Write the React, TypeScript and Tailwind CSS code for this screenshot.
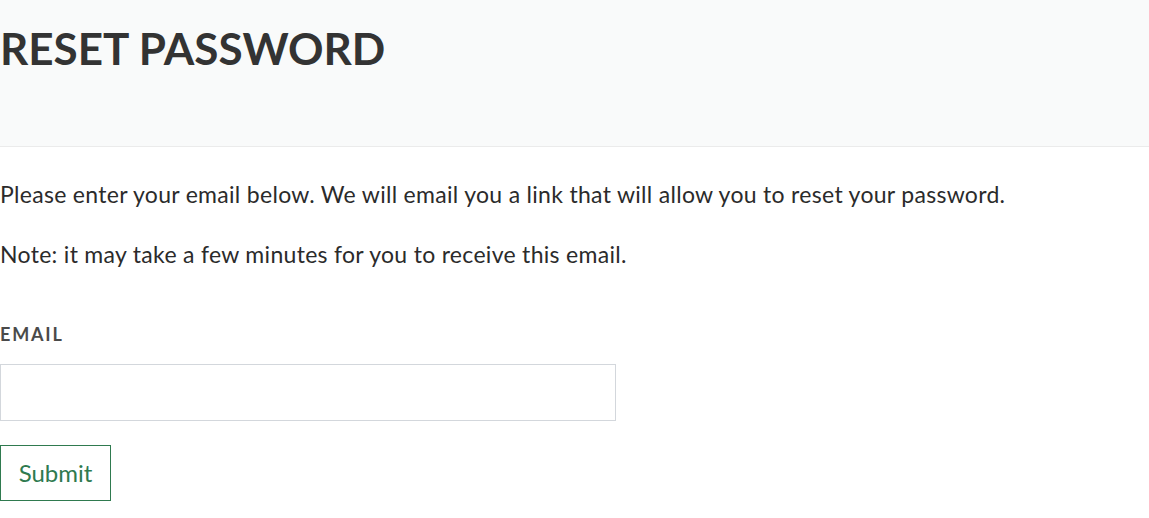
export default function App() {
  return (
    <div className="min-h-[518px] bg-white font-['Lato','Liberation_Sans',sans-serif] text-[#2b2b2b]">
      <header className="h-[147px] border-b border-[#ebebeb] bg-[#f9fafa] pt-[22px]">
        <h1 className="text-[44px] font-bold leading-[1.2] text-[#333333]">
          RESET PASSWORD
        </h1>
      </header>

      <main className="pt-[32px]">
        <p className="text-[23px] leading-[30px] tracking-[0.3px]">
          Please enter your email below. We will email you a link that will allow you to reset your password.
        </p>
        <p className="mt-[30px] text-[23px] leading-[30px] tracking-[0.3px]">
          Note: it may take a few minutes for you to receive this email.
        </p>

        <form className="mt-[52px]">
          <label className="block text-[18px] font-bold leading-[27px] tracking-[1.8px] text-[#4a4a4a]">
            EMAIL
          </label>
          <input
            type="email"
            className="mt-[16px] block h-[57px] w-[616px] border border-[#d3d7dc] bg-white px-3 outline-none"
          />
          <button
            type="button"
            className="mt-[24px] h-[56px] w-[111px] border border-[#2f7a4f] bg-white text-[24px] text-[#2f7a4f]"
          >
            Submit
          </button>
        </form>
      </main>
    </div>
  );
}
